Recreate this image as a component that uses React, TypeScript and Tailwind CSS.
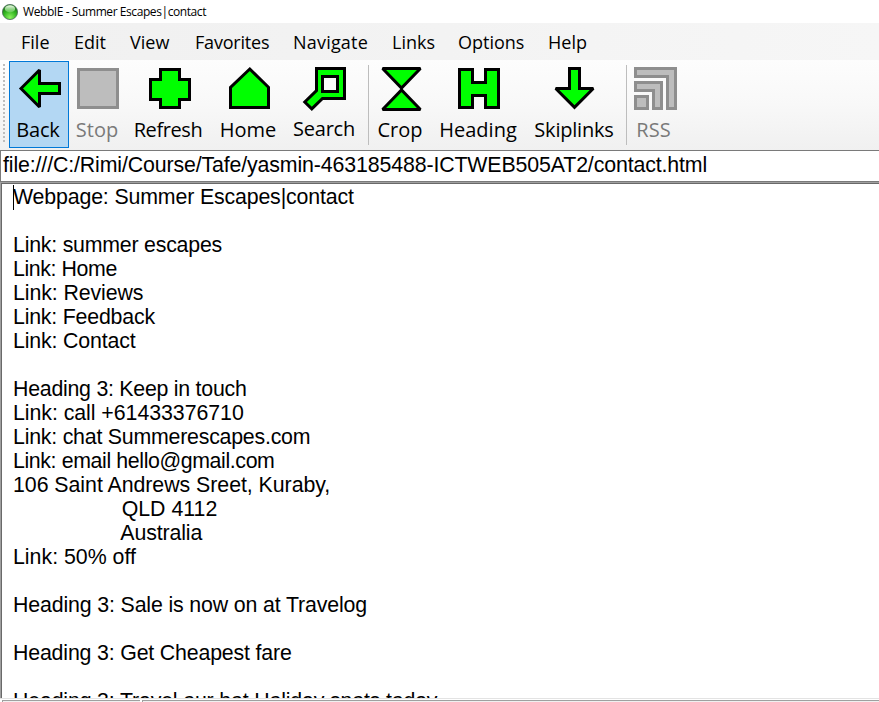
import type { ReactNode } from 'react';

const menu = [
  { label: 'File', cls: 'w-[53px]' },
  { label: 'Edit', cls: 'w-[56px]' },
  { label: 'View', cls: 'w-[65px]' },
  { label: 'Favorites', cls: 'w-[98px] tracking-[-0.2px]' },
  { label: 'Navigate', cls: 'w-[99px] tracking-[0.2px]' },
  { label: 'Links', cls: 'w-[66px]' },
  { label: 'Options', cls: 'w-[90px]' },
  { label: 'Help', cls: 'w-[60px]' },
];

const lines: [string, string?][] = [
  ['Webpage: Summer Escapes|contact', 'tracking-[-0.15px]'],
  [''],
  ['Link: summer escapes', 'tracking-[-0.22px]'],
  ['Link: Home', 'tracking-[-0.4px]'],
  ['Link: Reviews', 'tracking-[-0.1px]'],
  ['Link: Feedback', 'tracking-[-0.2px]'],
  ['Link: Contact', 'tracking-[-0.15px]'],
  [''],
  ['Heading 3: Keep in touch', 'tracking-[-0.25px]'],
  ['Link: call +61433376710', 'tracking-[-0.05px]'],
  ['Link: chat Summerescapes.com', 'tracking-[-0.22px]'],
  ['Link: email hello@gmail.com', 'tracking-[-0.38px]'],
  ['106 Saint Andrews Sreet, Kuraby,', 'tracking-[-0.04px]'],
  ['                  QLD 4112', 'pl-[2px]'],
  ['                  Australia', 'pl-[4px] tracking-[-0.12px]'],
  ['Link: 50% off'],
  [''],
  ['Heading 3: Sale is now on at Travelog', 'tracking-[-0.14px]'],
  [''],
  ['Heading 3: Get Cheapest fare', 'tracking-[-0.17px]'],
  [''],
  ['Heading 3: Travel our hot Holiday spots today', 'tracking-[-0.16px]'],
];

function Tool({ label, box, cls = '', text = '', children }: {
  label: string;
  box: string;
  cls?: string;
  text?: string;
  children: ReactNode;
}) {
  return (
    <button className={`flex h-[87px] shrink-0 flex-col items-center ${cls}`}>
      <svg
        viewBox={box}
        className="mt-[5px] h-[46px] w-[46px] shrink-0"
        fill="#00ff00"
        stroke="#000"
        strokeWidth="3"
        strokeMiterlimit="2"
      >
        {children}
      </svg>
      <span className={`mt-[4px] whitespace-nowrap text-[20px] leading-[28px] ${text}`}>{label}</span>
    </button>
  );
}

export default function App() {
  return (
    <div className="flex h-[702px] w-[879px] flex-col overflow-hidden bg-white font-['Open_Sans',sans-serif] text-black">
      <header className="flex h-[23px] shrink-0 items-center bg-white pl-[2px]">
        <svg viewBox="0 0 16 16" className="h-4 w-4 shrink-0">
          <defs>
            <radialGradient id="ball" cx="50%" cy="85%" r="70%">
              <stop offset="0" stopColor="#8bf25f" />
              <stop offset="0.6" stopColor="#35b823" />
              <stop offset="1" stopColor="#1a7d14" />
            </radialGradient>
            <linearGradient id="shine" x1="0" y1="0" x2="0" y2="1">
              <stop offset="0" stopColor="#f4fff0" />
              <stop offset="1" stopColor="#8fdc80" stopOpacity="0.5" />
            </linearGradient>
          </defs>
          <circle cx="8" cy="8" r="7.6" fill="url(#ball)" stroke="#4c6b5c" strokeWidth="0.8" />
          <ellipse cx="8" cy="4.8" rx="5.2" ry="3.6" fill="url(#shine)" />
        </svg>
        <span className="ml-[5px] whitespace-pre text-[12px] leading-[23px] tracking-[-0.42px]">WebbIE - Summer Escapes|contact</span>
      </header>

      <nav className="flex h-[37px] shrink-0 bg-linear-to-r from-[#f0f0f0] to-[#f6f6f6] pl-[21px]">
        {menu.map((m) => (
          <span key={m.label} className={`shrink-0 text-[18px] leading-[38px] ${m.cls}`}>{m.label}</span>
        ))}
      </nav>

      <div className="flex h-[90px] shrink-0 items-start bg-linear-to-b from-[#fdfdfd] via-[#f8f8f8] to-[#f0f0f0] pt-px">
        <div className="ml-[3px] mt-[3px] h-[80px] w-[2px] shrink-0 bg-[repeating-linear-gradient(to_bottom,#bdbdbd_0_2px,transparent_2px_4px)]" />
        <Tool label="Back" box="16 66 46 46" cls="ml-[4px] w-[60px] bg-[#b3d7f3] outline outline-1 -outline-offset-1 outline-[#0078d7]" text="mr-[2px] tracking-[-0.2px]">
          <path d="M21 88.5L39.5 70V83.5H59.5V93.5H39.5V107Z" />
        </Tool>
        <Tool label="Stop" box="74 66 46 46" cls="w-[56px] text-[#7a7a7a]">
          <rect x="78.5" y="69.5" width="39" height="38" fill="#bdbdbd" stroke="#8e8e8e" />
        </Tool>
        <Tool label="Refresh" box="145 66 46 46" cls="w-[86px]" text="tracking-[-0.4px]">
          <path d="M160.5 69.5H179.5V79.5H189.5V99.5H179.5V107.5H160.5V99.5H150.5V79.5H160.5Z" />
        </Tool>
        <Tool label="Home" box="225 66 46 46" cls="w-[74px]">
          <path d="M249.8 69L268.5 87.3V107.5H230.5V87.3Z" />
        </Tool>
        <Tool label="Search" box="301 66 46 46" cls="w-[78px]" text="-translate-y-px tracking-[-0.25px]">
          <path d="M316.5 68.5H344.5V98.5H322.5L311.8 108.8L304.8 102L316.5 90.5Z" />
          <rect x="322.5" y="76.5" width="15" height="15" fill="#f9f9f9" />
        </Tool>
        <div className="ml-[5px] mr-[2px] mt-[4px] h-[80px] w-px shrink-0 bg-[#bdbdbd]" />
        <Tool label="Crop" box="377 66 46 46" cls="w-[58px]">
          <path d="M382.6 68.5H420.4L401.5 88Z" />
          <path d="M382.6 109.5H420.4L401.5 90Z" />
        </Tool>
        <Tool label="Heading" box="455 66 46 46" cls="w-[98px]">
          <path d="M459.5 69.5H472.5V82.5H485.5V69.5H498.5V107.5H485.5V95.5H472.5V107.5H459.5Z" />
        </Tool>
        <Tool label="Skiplinks" box="551 66 46 46" cls="w-[94px]" text="tracking-[-0.2px]">
          <path d="M569.5 68.5H579.5V88.5H593.3L574.5 107.3L555.7 88.5H569.5Z" />
        </Tool>
        <div className="ml-[5px] mr-[4px] mt-[4px] h-[80px] w-px shrink-0 bg-[#bdbdbd]" />
        <Tool label="RSS" box="631 66 46 46" cls="w-[46px] text-[#7a7a7a]" text="mr-px">
          <g fill="#bdbdbd" stroke="#8e8e8e">
            <path d="M635.5 68.5H675.5V108.5H667.5V76.5H635.5Z" />
            <path d="M635.5 82.5H661.5V108.5H653.5V90.5H635.5Z" />
            <rect x="635.5" y="96.5" width="12" height="12" />
          </g>
        </Tool>
      </div>

      <div className="h-[32px] shrink-0 whitespace-pre border-y border-l border-[#7a7a7a] bg-white pl-[2px] font-['Liberation_Sans',sans-serif] text-[21.33px] leading-[29px] tracking-[-0.13px]">
        file:///C:/Rimi/Course/Tafe/yasmin-463185488-ICTWEB505AT2/contact.html
      </div>

      <main className="h-[516px] shrink-0 overflow-hidden border-l border-t border-[#a0a0a0] font-['Liberation_Sans',sans-serif] text-[21.33px] leading-[24px]">
        <div className="relative h-full border-l border-t border-[#696969] pl-[11px] pt-px">
          <span className="absolute left-[11px] top-[1px] h-[25px] w-px bg-black" />
          {lines.map(([text, cls = ''], i) => (
            <div key={i} className={`h-6 whitespace-pre ${cls}`}>{text}</div>
          ))}
        </div>
      </main>

      <footer className="flex h-[4px] shrink-0 gap-[2px] border-t border-[#e3e3e3] bg-white pl-[2px] pt-px">
        <div className="h-[2px] w-[138px] border-l border-t border-[#a0a0a0] bg-[#f0f0f0]" />
        <div className="h-[2px] flex-1 border-l border-t border-[#a0a0a0] bg-[#f0f0f0]" />
      </footer>
    </div>
  );
}
